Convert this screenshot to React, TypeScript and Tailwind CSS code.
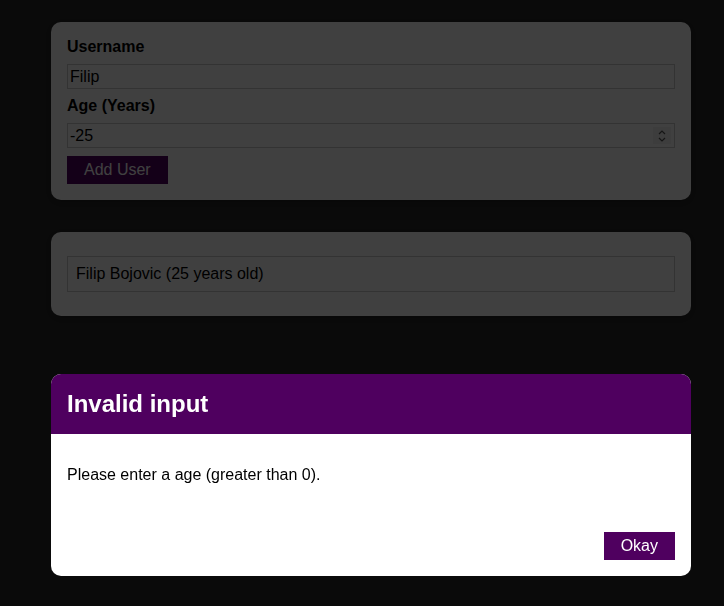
import { useState } from "react";

type User = { id: string; name: string; age: string };

function Card({ className, children }: { className?: string; children: React.ReactNode }) {
  return (
    <div className={`rounded-[10px] bg-white shadow-[0_2px_8px_rgba(0,0,0,0.26)] ${className ?? ""}`}>
      {children}
    </div>
  );
}

function Button({ children, onClick }: { children: React.ReactNode; onClick?: () => void }) {
  return (
    <button
      type="button"
      onClick={onClick}
      className="h-[28px] border border-[#4f005f] bg-[#4f005f] px-4 text-base leading-[18px] text-white cursor-pointer"
    >
      {children}
    </button>
  );
}

export default function App() {
  const [users] = useState<User[]>([{ id: "u1", name: "Filip Bojovic", age: "25" }]);
  const [username, setUsername] = useState("Filip");
  const [age, setAge] = useState("-25");
  const [showError, setShowError] = useState(true);

  return (
    <div className="min-h-[606px] bg-[#292929] pt-[22px] font-['Liberation_Sans',Arial,sans-serif] text-base text-black">
      {/* ADD USER FORM */}
      <Card className="ml-[51px] w-[640px] p-4">
        <form className="flex flex-col gap-2" onSubmit={(e) => e.preventDefault()}>
          <label htmlFor="username" className="font-bold leading-[18px]">
            Username
          </label>
          <input
            id="username"
            value={username}
            onChange={(e) => setUsername(e.target.value)}
            className="h-[25px] w-full border border-[#ccc] px-[2px] text-base leading-[18px] outline-none"
          />
          <label htmlFor="age" className="font-bold leading-[18px]">
            Age (Years)
          </label>
          <div className="relative">
            <input
              id="age"
              value={age}
              onChange={(e) => setAge(e.target.value)}
              className="h-[25px] w-full border border-[#ccc] px-[2px] text-base leading-[18px] outline-none"
            />
            {/* number spinner */}
            <div className="absolute right-[4px] top-[4px] flex h-[17px] w-[18px] flex-col items-center justify-center bg-[#f2f2f2]">
              <svg width="10" height="14" viewBox="0 0 10 14" fill="none" stroke="#555" strokeWidth="1.2">
                <path d="M2 5 L5 2 L8 5" />
                <path d="M2 9 L5 12 L8 9" />
              </svg>
            </div>
          </div>
          <div>
            <Button onClick={() => setShowError(true)}>Add User</Button>
          </div>
        </form>
      </Card>

      {/* USERS LIST */}
      <Card className="ml-[51px] mt-8 w-[640px]">
        <ul className="list-none p-4">
          {users.map((user) => (
            <li key={user.id} className="my-2 border border-[#ccc] p-2 leading-[18px]">
              {user.name} ({user.age} years old)
            </li>
          ))}
        </ul>
      </Card>

      {/* ERROR MODAL */}
      {showError && (
        <>
          <div className="fixed inset-0 z-10 bg-black/75" onClick={() => setShowError(false)} />
          <div className="fixed left-[51px] top-[374px] z-20 w-[640px] overflow-hidden rounded-[10px] bg-white">
            <header className="bg-[#4f005f] p-4">
              <h2 className="m-0 text-2xl font-bold leading-[28px] text-white">Invalid input</h2>
            </header>
            <div className="p-4">
              <p className="my-4 leading-[18px]">Please enter a age (greater than 0).</p>
            </div>
            <footer className="flex justify-end p-4">
              <Button onClick={() => setShowError(false)}>Okay</Button>
            </footer>
          </div>
        </>
      )}
    </div>
  );
}
